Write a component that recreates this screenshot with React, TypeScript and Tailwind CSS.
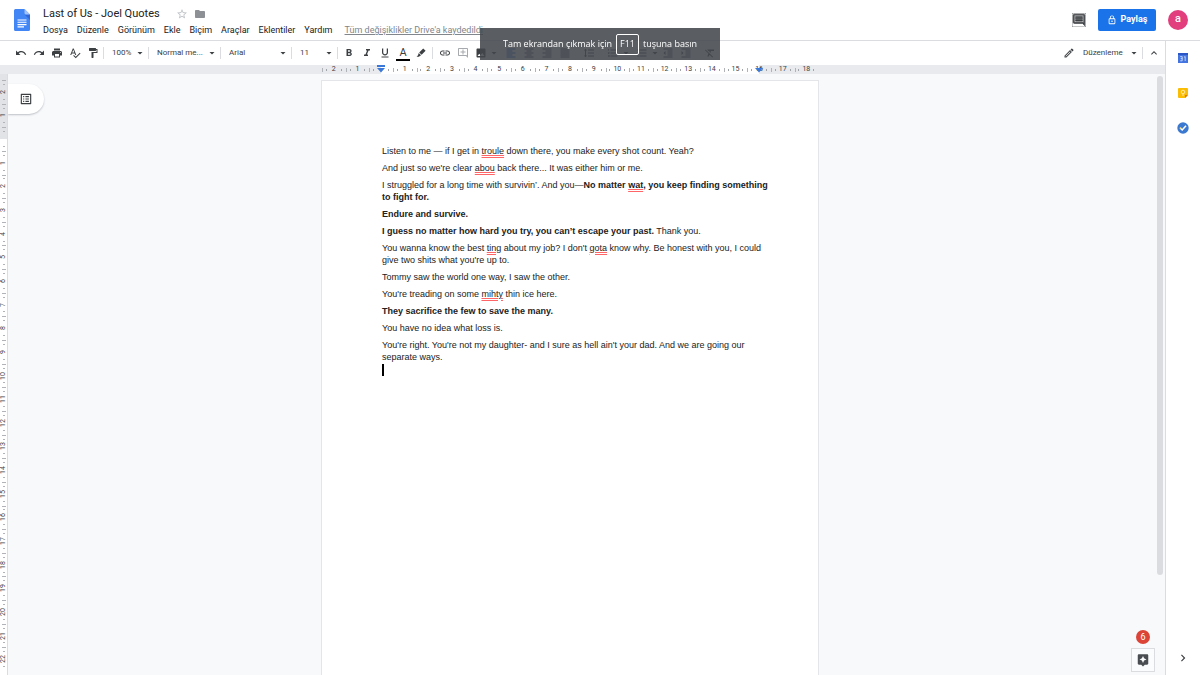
import type { ReactNode } from "react";
import type { IconType } from "react-icons";
import {
  MdArrowDropDown,
  MdAssistant,
  MdChevronRight,
  MdExpandLess,
  MdFolder,
  MdFormatAlignCenter,
  MdFormatAlignJustify,
  MdFormatAlignLeft,
  MdFormatAlignRight,
  MdFormatBold,
  MdFormatClear,
  MdFormatIndentDecrease,
  MdFormatIndentIncrease,
  MdFormatItalic,
  MdFormatLineSpacing,
  MdFormatListBulleted,
  MdFormatListNumbered,
  MdFormatPaint,
  MdFormatUnderlined,
  MdImage,
  MdLink,
  MdOutlineAddComment,
  MdOutlineComment,
  MdOutlineEdit,
  MdOutlineListAlt,
  MdOutlineLock,
  MdPrint,
  MdRedo,
  MdSpellcheck,
  MdStarBorder,
  MdUndo,
} from "react-icons/md";

const menus = ["Dosya", "Düzenle", "Görünüm", "Ekle", "Biçim", "Araçlar", "Eklentiler", "Yardım"];

const historyTools = [
  { label: "Geri al", icon: MdUndo },
  { label: "Yinele", icon: MdRedo },
  { label: "Yazdır", icon: MdPrint },
  { label: "Yazım denetimi", icon: MdSpellcheck },
  { label: "Biçimi boya", icon: MdFormatPaint },
];

const styleTools = [
  { label: "Kalın", icon: MdFormatBold },
  { label: "İtalik", icon: MdFormatItalic },
  { label: "Altı çizili", icon: MdFormatUnderlined },
];

// centimetres left of the margin count down to zero
const horizontalMarks = [2, 1, 0, ...Array.from({ length: 18 }, (_, i) => i + 1)];
const verticalMarks = [2, 1, 0, ...Array.from({ length: 22 }, (_, i) => i + 1)];

const ToolButton = ({ label, icon: Icon, color = "text-[#3c4043]" }: { label: string; icon: IconType; color?: string }) => (
  <button type="button" aria-label={label} className={`flex h-5 w-[18px] shrink-0 items-center justify-center ${color}`}>
    <Icon className="size-3" />
  </button>
);

const MenuArrow = ({ label }: { label: string }) => (
  <button type="button" aria-label={label} className="flex h-5 w-2 shrink-0 items-center justify-center text-[#3c4043]">
    <MdArrowDropDown className="size-3 shrink-0" />
  </button>
);

const Divider = () => <div className="h-3 w-px shrink-0 bg-[#dadce0]" />;

const ToolSelect = ({ label, value, width }: { label: string; value: string; width: string }) => (
  <div className={`relative flex h-5 shrink-0 items-center ${width}`}>
    <select aria-label={label} className="w-full appearance-none bg-transparent pl-2 text-[8px] leading-3 text-[#3c4043] outline-none">
      <option>{value}</option>
    </select>
    <MdArrowDropDown className="pointer-events-none absolute right-0.5 size-3 text-[#3c4043]" />
  </div>
);

const DocsLogo = () => (
  <svg viewBox="0 0 16 22" className="h-[22px] w-4 shrink-0" aria-hidden="true">
    <path d="M1.5 0H10.5L16 5.5V20.5A1.5 1.5 0 0 1 14.5 22H1.5A1.5 1.5 0 0 1 0 20.5V1.5A1.5 1.5 0 0 1 1.5 0Z" fill="#4285f4" />
    <path d="M10.5 5.5H16V11Z" fill="#3367d6" />
    <path d="M10.5 0L16 5.5H12A1.5 1.5 0 0 1 10.5 4Z" fill="#a1c2fa" />
    <path d="M3.5 11H12.5M3.5 13.3H12.5M3.5 15.6H12.5M3.5 17.9H10" stroke="#fff" strokeWidth="1.1" />
  </svg>
);

const Header = () => (
  <header className="flex h-[41px] shrink-0 items-center border-b border-[#dadce0] pl-3.5 pr-3">
    <DocsLogo />
    <div className="flex flex-1 flex-col pl-[13px] pt-1">
      <div className="flex h-4 items-center">
        <h1 className="text-[11px] leading-4 text-[#202124]">Last of Us - Joel Quotes</h1>
        <button type="button" aria-label="Yıldız ekle" className="ml-4 text-[#bdc1c6]">
          <MdStarBorder className="size-3" />
        </button>
        <button type="button" aria-label="Taşı" className="ml-1.5 text-[#8d9196]">
          <MdFolder className="size-3" />
        </button>
      </div>
      <nav className="flex h-4 items-center gap-[9px] text-[9px] leading-3 text-[#202124]">
        {menus.map((menu) => (
          <button key={menu} type="button">{menu}</button>
        ))}
        <a href="#gecmis" className="ml-[3px] text-[#80868b] underline">Tüm değişiklikler Drive'a kaydedildi</a>
      </nav>
    </div>
    <button type="button" aria-label="Yorum geçmişi" className="text-[#3c4043]">
      <MdOutlineComment className="size-3.5 stroke-current stroke-1" />
    </button>
    <button type="button" className="ml-3 flex h-[22px] w-[58px] items-center justify-center gap-1 rounded-xs bg-[#1a73e8] text-[9px] font-bold text-white">
      <MdOutlineLock className="size-2.5" />
      Paylaş
    </button>
    <button type="button" aria-label="Hesap" className="ml-3 size-5 rounded-full bg-[#e23d7c] pb-0.5 text-[11px] font-medium leading-4 text-white">
      a
    </button>
  </header>
);

const Toolbar = () => (
  <div className="flex h-6 shrink-0 items-center bg-white pl-3 pr-0.5">
    {historyTools.map((tool) => <ToolButton key={tool.label} {...tool} />)}
    <div className="w-px" />
    <Divider />
    <ToolSelect label="Yakınlaştırma" value="100%" width="w-11" />
    <Divider />
    <ToolSelect label="Stiller" value="Normal me..." width="w-[71px]" />
    <Divider />
    <ToolSelect label="Yazı tipi" value="Arial" width="w-[70px]" />
    <Divider />
    <ToolSelect label="Yazı tipi boyutu" value="11" width="w-[45px]" />
    <Divider />
    <div className="flex px-0.5">
      {styleTools.map((tool) => <ToolButton key={tool.label} {...tool} />)}
      <button type="button" aria-label="Metin rengi" className="flex h-5 w-[18px] flex-col items-center justify-center gap-px pt-0.5">
        <span className="text-[11px] leading-[11px] text-[#3c4043]">A</span>
        <span className="h-0.5 w-3.5 bg-black" />
      </button>
      <button type="button" aria-label="Vurgu rengi" className="flex h-5 w-[18px] items-center justify-center text-[#3c4043]">
        <svg viewBox="0 0 12 12" className="size-3" fill="currentColor" aria-hidden="true">
          <path d="M8.2 1.4L10.6 3.8L6.6 7.8L4.2 5.4ZM3.7 5.9L6.1 8.3L4.8 9L4 9.8H1.6L3 8.3Z" />
        </svg>
      </button>
    </div>
    <Divider />
    <div className="flex pl-[3px]">
      <ToolButton label="Bağlantı ekle" icon={MdLink} />
      <ToolButton label="Yorum ekle" icon={MdOutlineAddComment} color="text-[#a6a9ad]" />
      <ToolButton label="Resim ekle" icon={MdImage} />
      <MenuArrow label="Resim seçenekleri" />
    </div>
    <div className="flex pl-1">
      <ToolButton label="Sola hizala" icon={MdFormatAlignLeft} color="text-[#1a56db]" />
      <ToolButton label="Ortala" icon={MdFormatAlignCenter} />
      <ToolButton label="Sağa hizala" icon={MdFormatAlignRight} />
      <ToolButton label="İki yana yasla" icon={MdFormatAlignJustify} />
    </div>
    <div className="flex gap-1.5 pl-1.5">
      <ToolButton label="Satır aralığı" icon={MdFormatLineSpacing} />
      <div className="flex">
        <ToolButton label="Numaralı liste" icon={MdFormatListNumbered} />
        <MenuArrow label="Numaralı liste seçenekleri" />
      </div>
    </div>
    <div className="flex pl-[3px]">
      <ToolButton label="Madde işaretli liste" icon={MdFormatListBulleted} />
      <MenuArrow label="Madde işareti seçenekleri" />
      <ToolButton label="Girintiyi azalt" icon={MdFormatIndentDecrease} />
      <ToolButton label="Girintiyi artır" icon={MdFormatIndentIncrease} />
    </div>
    <div className="flex pl-1.5">
      <ToolButton label="Biçimlendirmeyi temizle" icon={MdFormatClear} />
    </div>
    <div className="ml-auto flex items-center text-[#3c4043]">
      <MdOutlineEdit className="size-3" />
      <ToolSelect label="Düzenleme modu" value="Düzenleme" width="w-[67px]" />
      <Divider />
      <div className="w-0.5" />
      <ToolButton label="Menüleri gizle" icon={MdExpandLess} />
    </div>
  </div>
);

const Marker = () => (
  <svg viewBox="0 0 8 8" className="absolute inset-x-0 top-0 mx-auto size-2" fill="#3b78d8" aria-hidden="true">
    <path d="M0 0H8V2H0ZM0 3H8L4 7.5Z" />
  </svg>
);

const HorizontalRuler = () => (
  <div className="flex h-[9px] shrink-0 justify-center bg-[#e8eaed] pr-[25px]">
    <div className="flex w-[496px] text-[7px] leading-[9px] text-[#3c4043]">
      {horizontalMarks.map((mark, i) => (
        <div
          key={i}
          className={`relative flex flex-1 items-center justify-between ${
            i === 2 ? "bg-linear-to-r from-[#e8eaed] from-50% to-white to-50%"
            : i === 18 ? "bg-linear-to-r from-white from-50% to-[#e8eaed] to-50%"
            : i > 2 && i < 18 ? "bg-white" : ""
          }`}
        >
          <span className="h-1 w-px bg-[#b0b3b8]" />
          <span className="h-0.5 w-px bg-[#a0a4a8]" />
          <span className="flex w-2 justify-center">{mark || ""}</span>
          <span className="h-0.5 w-px bg-[#a0a4a8]" />
          <span className="w-px" />
          {mark === 0 && <Marker />}
          {i === 18 && (
            <svg viewBox="0 0 8 8" className="absolute inset-x-0 top-0 mx-auto size-2" fill="#3b78d8" aria-hidden="true">
              <path d="M0 3H8L4 7.5Z" />
            </svg>
          )}
        </div>
      ))}
    </div>
  </div>
);

const VerticalRuler = () => (
  <div className="w-2 shrink-0 overflow-hidden border-r border-[#dadce0] bg-white text-[7px] leading-[7px] text-[#3c4043]">
    <div className="h-1.5 bg-[#e1e3e6]" />
    <div className="flex h-[591px] flex-col">
      {verticalMarks.map((mark, i) => (
        <div
          key={i}
          className={`flex flex-1 flex-col items-center justify-between ${
            i < 2 ? "bg-[#e1e3e6]" : i === 2 ? "bg-linear-to-b from-[#e1e3e6] from-50% to-white to-50%" : ""
          }`}
        >
          <span className="h-px w-1 bg-[#b0b3b8]" />
          <span className="h-px w-0.5 bg-[#b0b3b8]" />
          <span className="flex h-2 w-[7px] rotate-180 items-center justify-center [writing-mode:vertical-rl]">{mark || ""}</span>
          <span className="h-px w-0.5 bg-[#b0b3b8]" />
          <span className="h-px" />
        </div>
      ))}
    </div>
  </div>
);

const Typo = ({ children }: { children: ReactNode }) => (
  <span className="underline decoration-red-400 decoration-double decoration-1 underline-offset-1">{children}</span>
);

const Page = () => (
  <article className="mt-1.5 w-[498px] shrink-0 border border-b-0 border-[#e3e5e8] bg-white pl-[60px] pr-10 pt-16 font-['Liberation_Sans',Arial,sans-serif] text-[9px] leading-3 text-[#222]">
    <div className="flex flex-col gap-[5px]">
      <p>Listen to me — if I get in <Typo>troule</Typo> down there, you make every shot count. Yeah?</p>
      <p>And just so we're clear <Typo>abou</Typo> back there... It was either him or me.</p>
      <p>
        I struggled for a long time with survivin’. And you—
        <b>No matter <Typo>wat</Typo>, you keep finding something<br />to fight for.</b>
      </p>
      <p><b>Endure and survive.</b></p>
      <p><b>I guess no matter how hard you try, you can’t escape your past.</b> Thank you.</p>
      <p>
        You wanna know the best <Typo>ting</Typo> about my job? I don't <Typo>gota</Typo> know why. Be honest with you, I could<br />
        give two shits what you're up to.
      </p>
      <p>Tommy saw the world one way, I saw the other.</p>
      <p>You're treading on some <Typo>mihty</Typo> thin ice here.</p>
      <p><b>They sacrifice the few to save the many.</b></p>
      <p>You have no idea what loss is.</p>
      <p>
        You're right. You're not my daughter- and I sure as hell ain't your dad. And we are going our<br />
        separate ways.
      </p>
    </div>
    <div className="mt-px h-3 w-0.5 bg-black" />
  </article>
);

const Canvas = () => (
  <main className="relative flex flex-1 justify-center overflow-hidden bg-[#f8f9fb] pr-[25px]">
    <Page />
    <button type="button" aria-label="Belge özetini göster" className="absolute left-0 top-2.5 flex h-[30px] w-9 items-center justify-center rounded-r-full bg-white text-[#3c4043] shadow-[0_1px_2px_#bdc1c6]">
      <MdOutlineListAlt className="size-3.5" />
    </button>
    <div className="absolute bottom-[3px] right-0.5 flex flex-col items-center gap-1">
      <span className="flex size-3.5 items-center justify-center rounded-full bg-[#db4437] text-[9px] leading-3 text-white">6</span>
      <button type="button" aria-label="Keşfet" className="flex size-6 items-center justify-center border border-[#dadce0] bg-[#fbfcfd] text-[#4a4d51]">
        <MdAssistant className="size-3.5" />
      </button>
    </div>
  </main>
);

const SidePanel = () => (
  <aside className="flex w-[35px] shrink-0 flex-col items-center border-l border-[#dadce0] bg-white pb-2.5 pt-[11px]">
    <div className="flex flex-col gap-[23px]">
      <button type="button" aria-label="Takvim">
        <svg viewBox="0 0 12 12" className="size-3" aria-hidden="true">
          <path d="M1 1H11V11H1Z" fill="#4374e0" />
          <path d="M1 1H11V3H1Z" fill="#2a56c6" />
          <path d="M3.2 4.6H5.2V8.8H3.2M3.7 6.6H5.2M7 5.2L8.2 4.6V9" stroke="#dbe6fd" strokeWidth="0.8" fill="none" />
        </svg>
      </button>
      <button type="button" aria-label="Keep">
        <svg viewBox="0 0 12 12" className="size-3" aria-hidden="true">
          <path d="M2 1H10A1 1 0 0 1 11 2V8L8 11H2A1 1 0 0 1 1 10V2A1 1 0 0 1 2 1Z" fill="#fbbc04" />
          <path d="M11 8L8 11V8Z" fill="#e37400" />
          <circle cx="6" cy="5" r="1.8" fill="none" stroke="#fff3c4" strokeWidth="0.8" />
          <path d="M5 8H7" stroke="#fff3c4" strokeWidth="0.8" />
        </svg>
      </button>
      <button type="button" aria-label="Görevler">
        <svg viewBox="0 0 12 12" className="size-3" aria-hidden="true">
          <circle cx="6" cy="6" r="5.7" fill="#3b78cf" />
          <path d="M3.4 6.2L5.2 8L9 3.8" stroke="#fff" strokeWidth="1.5" fill="none" />
          <circle cx="3.5" cy="6.2" r="0.9" fill="#fbe08a" />
        </svg>
      </button>
    </div>
    <button type="button" aria-label="Yan paneli gizle" className="mt-auto text-[#3c4043]">
      <MdChevronRight className="size-3.5" />
    </button>
  </aside>
);

const FullscreenHint = () => (
  <div className="fixed left-1/2 top-7 flex h-8 w-60 -translate-x-1/2 items-center justify-center gap-1 bg-[#43474c]/88 font-['Open_Sans',sans-serif] text-[9px] text-white">
    <span>Tam ekrandan çıkmak için</span>
    <kbd className="flex h-[21px] w-[23px] items-center justify-center rounded-xs border border-white font-['Open_Sans',sans-serif] text-[9px]">F11</kbd>
    <span>tuşuna basın</span>
  </div>
);

const App = () => (
  <div className="flex h-screen flex-col overflow-hidden bg-white font-[Roboto,sans-serif]">
    <Header />
    <div className="flex min-h-0 flex-1">
      <div className="flex min-w-0 flex-1 flex-col">
        <Toolbar />
        <HorizontalRuler />
        <div className="flex min-h-0 flex-1">
          <VerticalRuler />
          <Canvas />
          <div className="w-2 shrink-0 bg-[#f8f9fb] pt-0.5">
            <div className="h-5/6 w-1.5 rounded-full bg-[#dadce0]" />
          </div>
        </div>
      </div>
      <SidePanel />
    </div>
    <FullscreenHint />
  </div>
);

export default App;
